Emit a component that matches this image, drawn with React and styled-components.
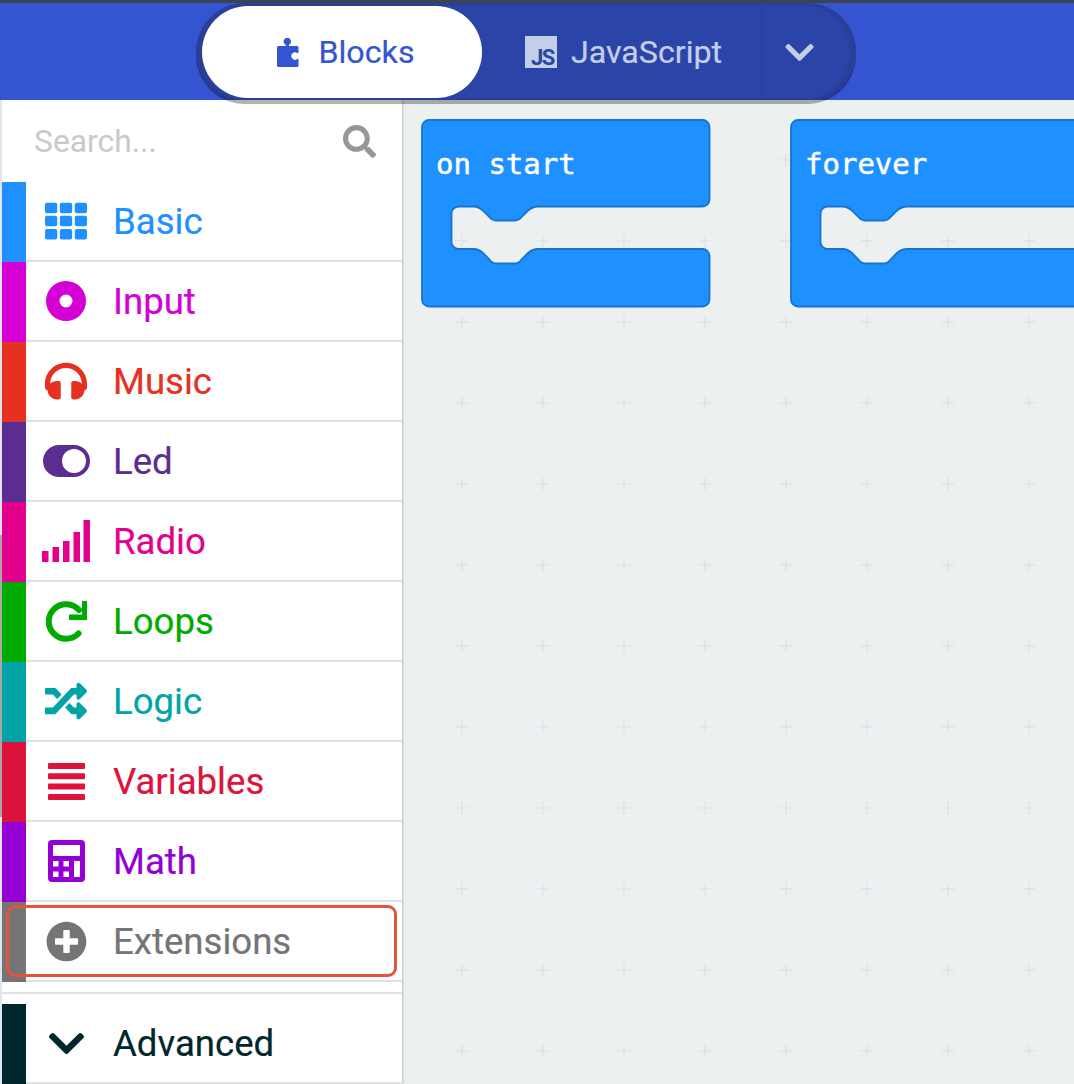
import React from 'react';
import styled, { createGlobalStyle } from 'styled-components';
import {
  FaTh, FaHeadphones, FaRandom, FaPlusCircle, FaChevronDown, FaSearch,
} from 'react-icons/fa';

const GlobalStyle = createGlobalStyle`
  html, body {
    margin: 0;
    height: 1084px;
    overflow: hidden;
    background: #e2e6ee;
    font-family: Roboto, "Liberation Sans", sans-serif;
  }
`;

const Page = styled.div`
  width: 1074px;
  height: 1084px;
  display: flex;
  flex-direction: column;
  position: relative;
  overflow: hidden;
`;

const Header = styled.header`
  height: 97px;
  flex: none;
  border-top: 3px solid #3c4250;
  background: #3454d1;
  padding-left: 196px;
  position: relative;
  z-index: 2;
`;

const Toggle = styled.div`
  width: 660px;
  height: 97px;
  box-sizing: border-box;
  display: flex;
  background: #2a44a8;
  border: solid #2c3f98;
  border-width: 3px 6px 2px 6px;
  border-radius: 50px;
  box-shadow: 0 4px 0 rgba(0, 0, 0, 0.3);
`;

const Tab = styled.div`
  width: ${p => p.$width}px;
  flex: none;
  box-sizing: border-box;
  display: flex;
  align-items: center;
  justify-content: center;
  gap: ${p => p.$gap}px;
  padding: 0 ${p => p.$padRight || 0}px 0 ${p => p.$padLeft || 0}px;
  font-size: 32.2px;
  -webkit-text-stroke: 0.2px currentColor;
  color: ${p => (p.$active ? '#3454d1' : '#c5cee9')};
  background: ${p => (p.$active ? '#fff' : 'transparent')};
  border-radius: ${p => (p.$active ? '46px' : '0')};
  border-left: ${p => (p.$divided ? '1px solid #2c3f98' : '0')};
`;

const JsBadge = styled.span`
  width: 32px;
  height: 32px;
  background: #c5cee9;
  color: #2a44a8;
  font-size: 22px;
  font-weight: 700;
  letter-spacing: -1.5px;
  display: flex;
  align-items: flex-end;
  justify-content: flex-end;
  padding: 0 3px 0 0;
  box-sizing: border-box;
  line-height: 20px;
  -webkit-text-stroke: 0;
`;

const Main = styled.div`
  flex: 1;
  display: flex;
  min-height: 0;
`;

const Sidebar = styled.aside`
  width: 400px;
  margin-left: 2px;
  flex: none;
  background: #fff;
  box-shadow: 1px 0 2px rgba(0, 0, 0, 0.2);
  position: relative;
  z-index: 1;
`;

const EdgeStrip = styled.div`
  position: absolute;
  left: -2px;
  top: 435px;
  width: 2px;
  height: 282px;
  background: #a8a8a8;
`;

const SearchRow = styled.div`
  height: 82px;
  display: flex;
  align-items: center;
  padding: 0 26px 0 32px;
  color: #969696;
  font-size: 33px;
`;

const SearchInput = styled.input`
  flex: 1;
  min-width: 0;
  border: 0;
  outline: 0;
  padding: 0;
  font-family: inherit;
  font-size: 31.8px;
  &::placeholder {
    color: #c9c9c9;
    opacity: 1;
  }
`;

const Row = styled.div`
  height: 80px;
  display: flex;
  color: ${p => p.$color};
  position: relative;
`;

const Bar = styled.div`
  width: 24px;
  flex: none;
  background: ${p => p.$color};
`;

const RowBody = styled.div`
  flex: 1;
  display: flex;
  align-items: center;
  border-bottom: 2px solid #e0e1e2;
`;

const IconSlot = styled.span`
  width: 80px;
  flex: none;
  display: flex;
  justify-content: center;
  align-items: center;
  svg {
    display: block;
  }
`;

const Label = styled.span`
  margin-left: 7px;
  padding-top: 2px;
  font-size: 36.6px;
  line-height: 40px;
  -webkit-text-stroke: 0.2px currentColor;
`;

const Highlight = styled.div`
  position: absolute;
  left: 4px;
  top: 3px;
  width: 391px;
  height: 72px;
  box-sizing: border-box;
  border: 3px solid #e4533c;
  border-radius: 9px;
  pointer-events: none;
`;

const Rule = styled.div`
  height: 2px;
  margin: 10px 0;
  background: #e0e1e2;
`;

const Workspace = styled.main`
  flex: 1;
  position: relative;
  overflow: hidden;
  background: #ecf0f1;
`;

const Grid = styled.svg`
  position: absolute;
  inset: 0;
  width: 100%;
  height: 100%;
`;

const BlockShape = styled.svg`
  position: absolute;
  left: ${p => p.$x}px;
  top: 20px;
  overflow: visible;
`;

const blockPath = w => `M7 0H${w - 7}a7 7 0 0 1 7 7V79.500a7 7 0 0 1-7 7H116c-4 0-7 1.500-10 4l-6 6c-2 2.500-4 4-7 4H74c-3 0-5-1.500-7-4l-6-6c-3-2.500-5-4-9-4H36.500a7 7 0 0 0-7 7V122a7 7 0 0 0 7 7H52c4 0 6 1.500 9 4l6 6c2 3 4 4.500 7 4.500H93c3 0 5-1.500 7-4.500l6-6c3-2.500 6-4 10-4H${w - 7}a7 7 0 0 1 7 7V179.500a7 7 0 0 1-7 7H7a7 7 0 0 1-7-7V7a7 7 0 0 1 7-7Z`;

function Block({ x, width, label }) {
  return (
    <BlockShape $x={x} width={width} height={187}>
      <path d={blockPath(width)} fill="#1e90ff" stroke="#1873cc" strokeWidth="1.800" />
      <text
        x="14"
        y="53.500"
        fill="#fff"
        stroke="#fff"
        strokeWidth="0.500"
        fontFamily="'DejaVu Sans Mono', monospace"
        fontSize="29"
      >
        {label}
      </text>
    </BlockShape>
  );
}

const PuzzleIcon = () => (
  <svg width="22" height="29" viewBox="0 0 22 29" fill="currentColor">
    <path d="M1.500 8H8c.8 0 1-.6.6-1.200A3.700 3.700 0 1 1 12 6.800c-.4.6-.2 1.200.6 1.200H20a1.500 1.500 0 0 1 1.500 1.500v5c0 .8-.6 1-1.200.6A3.700 3.700 0 1 0 20.300 21c.6-.4 1.200-.2 1.200.6v5.900A1.500 1.500 0 0 1 20 29H1.500A1.500 1.500 0 0 1 0 27.500V9.500A1.500 1.500 0 0 1 1.500 8Z" />
  </svg>
);

const InputIcon = () => (
  <svg width="40" height="40" viewBox="0 0 40 40">
    <path fill="currentColor" fillRule="evenodd" d="M20 0a20 20 0 1 0 0 40a20 20 0 1 0 0-40ZM20 13.500a6.500 6.500 0 1 1 0 13a6.500 6.500 0 1 1 0-13Z" />
  </svg>
);

const LedIcon = () => (
  <svg width="47" height="32" viewBox="0 0 47 32">
    <path fill="currentColor" fillRule="evenodd" d="M16 0H31a16 16 0 0 1 0 32H16a16 16 0 0 1 0-32ZM31 4a12 12 0 1 0 0 24a12 12 0 1 0 0-24Z" />
  </svg>
);

const RadioIcon = () => (
  <svg width="48" height="42" viewBox="0 0 48 42" fill="currentColor">
    <rect x="0" y="31" width="6.500" height="11" />
    <rect x="10.500" y="27" width="6.500" height="15" />
    <rect x="21" y="21" width="6.500" height="21" />
    <rect x="31.500" y="12" width="6.500" height="30" />
    <rect x="41.500" y="0" width="6.500" height="42" />
  </svg>
);

const LoopsIcon = () => (
  <svg width="41" height="41" viewBox="0 0 41 41">
    <path d="M32.500 32.500A17.300 17.300 0 1 1 33 9" fill="none" stroke="currentColor" strokeWidth="6" strokeLinecap="round" />
    <path d="M36 0H41V19H23V13.500H36Z" fill="currentColor" />
  </svg>
);

const VariablesIcon = () => (
  <svg width="37" height="37" viewBox="0 0 37 37" fill="currentColor">
    <rect y="0" width="37" height="6" rx="1" />
    <rect y="10.300" width="37" height="6" rx="1" />
    <rect y="20.600" width="37" height="6" rx="1" />
    <rect y="31" width="37" height="6" rx="1" />
  </svg>
);

const MathIcon = () => (
  <svg width="37" height="42" viewBox="0 0 37 42">
    <rect width="37" height="42" rx="4" fill="currentColor" />
    <rect x="5" y="5" width="27" height="11" fill="#fff" />
    <rect x="5" y="21" width="5.500" height="5.500" fill="#fff" />
    <rect x="15.500" y="21" width="5.500" height="5.500" fill="#fff" />
    <rect x="26" y="21" width="6" height="16" fill="#fff" />
    <rect x="5" y="31.500" width="5.500" height="5.500" fill="#fff" />
    <rect x="15.500" y="31.500" width="5.500" height="5.500" fill="#fff" />
  </svg>
);

const categories = [
  { name: 'Basic', color: '#1e90ff', icon: <FaTh size={42} /> },
  { name: 'Input', color: '#d400d4', icon: <InputIcon /> },
  { name: 'Music', color: '#e63022', icon: <FaHeadphones size={42} /> },
  { name: 'Led', color: '#5c2d91', icon: <LedIcon /> },
  { name: 'Radio', color: '#e3008c', icon: <RadioIcon /> },
  { name: 'Loops', color: '#00aa00', icon: <LoopsIcon /> },
  { name: 'Logic', color: '#00a4a6', icon: <FaRandom size={42} /> },
  { name: 'Variables', color: '#dc143c', icon: <VariablesIcon /> },
  { name: 'Math', color: '#9400d3', icon: <MathIcon /> },
];

function Category({ name, color, icon, children }) {
  return (
    <Row $color={color}>
      <Bar $color={color} />
      <RowBody>
        <IconSlot>{icon}</IconSlot>
        <Label>{name}</Label>
      </RowBody>
      {children}
    </Row>
  );
}

export default function App() {
  return (
    <Page>
      <GlobalStyle />
      <Header>
        <Toggle>
          <Tab $active $width={280} $gap={19} $padLeft={8}>
            <PuzzleIcon />
            Blocks
          </Tab>
          <Tab $width={279} $gap={14} $padLeft={4}>
            <JsBadge>JS</JsBadge>
            JavaScript
          </Tab>
          <Tab $divided $width={89} $gap={0} $padRight={14}>
            <FaChevronDown size={33} />
          </Tab>
        </Toggle>
      </Header>
      <Main>
        <Sidebar>
          <EdgeStrip />
          <SearchRow>
            <SearchInput placeholder="Search..." readOnly />
            <FaSearch />
          </SearchRow>
          {categories.map(c => (
            <Category key={c.name} {...c} />
          ))}
          <Category name="Extensions" color="#757575" icon={<FaPlusCircle size={41} />}>
            <Highlight />
          </Category>
          <Rule />
          <Category name="Advanced" color="#00272b" icon={<FaChevronDown size={41} />} />
        </Sidebar>
        <Workspace>
          <Grid>
            <defs>
              <pattern id="plus" width="81" height="81" patternUnits="userSpaceOnUse">
                <path d="M60 53.500V66.500M53.500 60H66.500" stroke="#dcdfe1" strokeWidth="1" fill="none" />
              </pattern>
            </defs>
            <rect width="100%" height="100%" fill="url(#plus)" />
          </Grid>
          <Block x={20} width={287.5} label="on start" />
          <Block x={389.4} width={330} label="forever" />
        </Workspace>
      </Main>
    </Page>
  );
}
